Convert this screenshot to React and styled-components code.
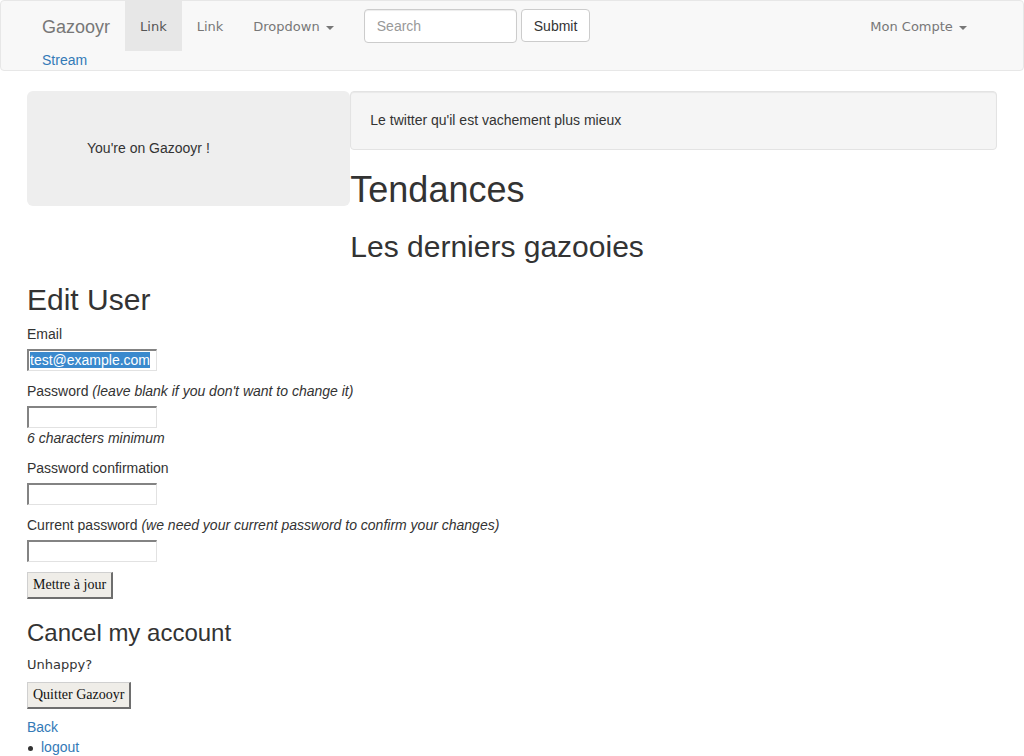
import React from "react";
import styled, { createGlobalStyle, css } from "styled-components";

const GlobalStyle = createGlobalStyle`
  html, body { margin: 0; padding: 0; background: #fff; }
  body {
    font-family: "Liberation Sans", Arial, sans-serif;
    font-size: 14px;
    line-height: 20px;
    color: #333;
  }
  * { box-sizing: border-box; }
`;

const Navbar = styled.nav`
  background: #f8f8f8;
  border: 1px solid #e7e7e7;
  border-radius: 4px;
  margin-bottom: 20px;
`;

const NavInner = styled.div`
  width: 970px;
  margin: 0 auto;
  padding: 0 15px;
`;

const NavTop = styled.div`
  display: flex;
  align-items: flex-start;
  height: 50px;
`;

const Brand = styled.a`
  display: block;
  margin-left: -15px;
  padding: 16px 15px 14px;
  font-size: 18px;
  line-height: 20px;
  color: #777;
  text-decoration: none;
`;

const NavList = styled.ul`
  display: flex;
  list-style: none;
  margin: 0;
  padding: 0;
`;

const NavLink = styled.a`
  display: block;
  padding: 16px 15px 14px;
  font-family: "DejaVu Sans", Verdana, sans-serif;
  font-size: 13px;
  line-height: 20px;
  color: ${(p) => (p.$active ? "#555" : "#777")};
  background: ${(p) => (p.$active ? "#e7e7e7" : "transparent")};
  text-decoration: none;
  white-space: nowrap;
`;

const Caret = styled.span`
  display: inline-block;
  width: 0;
  height: 0;
  margin-left: 2px;
  vertical-align: middle;
  border-top: 4px solid #777;
  border-left: 4px solid transparent;
  border-right: 4px solid transparent;
`;

const SearchForm = styled.form`
  display: flex;
  gap: 4px;
  margin: 8px 0;
  padding: 0 15px;
`;

const SearchInput = styled.input`
  width: 153px;
  height: 34px;
  padding: 6px 12px;
  font-family: "Liberation Sans", Arial, sans-serif;
  font-size: 14px;
  color: #555;
  background: #fff;
  border: 1px solid #ccc;
  border-radius: 4px;
  box-shadow: inset 0 1px 1px rgba(0, 0, 0, 0.075);
  outline: none;
  &::placeholder { color: #999; }
`;

const SubmitButton = styled.button`
  height: 33px;
  padding: 6px 12px;
  font-family: "Liberation Sans", Arial, sans-serif;
  font-size: 14px;
  line-height: 20px;
  color: #333;
  background: #fff;
  border: 1px solid #ccc;
  border-radius: 4px;
`;

const Spacer = styled.div`
  flex: 1;
`;

const StreamLink = styled.a`
  display: block;
  line-height: 19px;
  color: #337ab7;
  text-decoration: none;
`;

const Main = styled.main`
  width: 970px;
  margin: 0 auto;
`;

const TopRow = styled.div`
  display: grid;
  grid-template-columns: 323.33px 1fr;
  align-items: start;
`;

const Jumbotron = styled.div`
  padding: 47px 60px 48px;
  background: #eee;
  border-radius: 6px;
`;

const Well = styled.div`
  padding: 18px 19px 19px;
  margin-bottom: 20px;
  background: #f5f5f5;
  border: 1px solid #e3e3e3;
  border-radius: 4px;
  box-shadow: inset 0 1px 1px rgba(0, 0, 0, 0.05);
`;

const Heading = styled.h1`
  margin: ${(p) => p.$margin || "20px 0 10px"};
  font-size: ${(p) => p.$size}px;
  line-height: 1.1;
  font-weight: 500;
  color: #333;
`;

const Field = styled.div`
  margin-bottom: 10px;
`;

const Label = styled.label`
  display: block;
  line-height: 20px;
  margin-bottom: 5px;
`;

const Hint = styled.em`
  display: block;
  line-height: 20px;
`;

const fieldCss = css`
  display: block;
  width: 130px;
  height: 22px;
  padding: 0 1px;
  margin: 0;
  font-family: "Liberation Sans", Arial, sans-serif;
  font-size: 14px;
  line-height: 18px;
  color: #000;
  background: #fff;
  border-style: solid;
  border-width: 2px 1px 1px 2px;
  border-color: #838383 #e2e2e2 #e2e2e2 #838383;
  outline: none;
`;

const TextField = styled.input`
  ${fieldCss}
`;

const FilledField = styled.div`
  ${fieldCss}
  white-space: nowrap;
  overflow: hidden;
`;

const Selected = styled.span`
  background: #3a89cd;
  color: #fff;
`;

const NativeButton = styled.button`
  display: block;
  height: 27px;
  padding: 0 5px;
  font-family: "Liberation Serif", "Times New Roman", serif;
  font-size: 14px;
  color: #111;
  background: #efede8;
  border-style: solid;
  border-width: 1px 2px 2px 1px;
  border-color: #d0d0d0 #6e6e6e #6e6e6e #d0d0d0;
  border-radius: 0;
`;

const Unhappy = styled.p`
  margin: 0 0 7px;
  font-family: "DejaVu Sans", Verdana, sans-serif;
  font-size: 13px;
  line-height: 20px;
`;

const Link = styled.a`
  display: ${(p) => (p.$block ? "block" : "inline")};
  margin-top: ${(p) => p.$top || 0}px;
  color: #337ab7;
  text-decoration: none;
`;

const BulletList = styled.ul`
  margin: 0;
  padding: 0;
  list-style: none;
`;

const BulletItem = styled.li`
  line-height: 20px;
  &::before {
    content: "";
    display: inline-block;
    width: 5px;
    height: 5px;
    margin: 0 8px 0 1px;
    border-radius: 50%;
    background: #333;
    vertical-align: middle;
  }
`;

export default function App() {
  return (
    <>
      <GlobalStyle />
      <Navbar>
        <NavInner>
          <NavTop>
            <Brand href="#">Gazooyr</Brand>
            <NavList>
              <li><NavLink href="#" $active>Link</NavLink></li>
              <li><NavLink href="#">Link</NavLink></li>
              <li>
                <NavLink href="#">
                  Dropdown <Caret />
                </NavLink>
              </li>
            </NavList>
            <SearchForm onSubmit={(e) => e.preventDefault()}>
              <SearchInput type="text" placeholder="Search" />
              <SubmitButton type="submit">Submit</SubmitButton>
            </SearchForm>
            <Spacer />
            <NavList>
              <li>
                <NavLink href="#">
                  Mon Compte <Caret />
                </NavLink>
              </li>
            </NavList>
          </NavTop>
          <StreamLink href="#">Stream</StreamLink>
        </NavInner>
      </Navbar>

      <Main>
        <TopRow>
          <Jumbotron>You're on Gazooyr !</Jumbotron>
          <div>
            <Well>Le twitter qu'il est vachement plus mieux</Well>
            <Heading $size={36}>Tendances</Heading>
            <Heading as="h2" $size={30} $margin="20px 0 0">
              Les derniers gazooies
            </Heading>
          </div>
        </TopRow>

        <Heading as="h2" $size={30} $margin="20px 0 8px">Edit User</Heading>
        <form onSubmit={(e) => e.preventDefault()}>
          <Field>
            <Label>Email</Label>
            <FilledField>
              <Selected>test@example.com</Selected>
            </FilledField>
          </Field>
          <Field>
            <Label>
              Password <i>(leave blank if you don't want to change it)</i>
            </Label>
            <TextField type="password" />
            <Hint>6 characters minimum</Hint>
          </Field>
          <Field>
            <Label>Password confirmation</Label>
            <TextField type="password" />
          </Field>
          <Field>
            <Label>
              Current password <i>(we need your current password to confirm your changes)</i>
            </Label>
            <TextField type="password" />
          </Field>
          <NativeButton type="submit">Mettre à jour</NativeButton>
        </form>

        <Heading as="h3" $size={24} $margin="21px 0 9px">Cancel my account</Heading>
        <Unhappy>Unhappy?</Unhappy>
        <NativeButton type="button">Quitter Gazooyr</NativeButton>
        <Link href="#" $block $top={8}>Back</Link>
        <BulletList>
          <BulletItem><Link href="#">logout</Link></BulletItem>
        </BulletList>
      </Main>
    </>
  );
}
